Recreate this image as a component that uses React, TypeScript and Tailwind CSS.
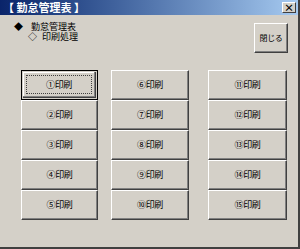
import React from "react";

const nums = ["①","②","③","④","⑤","⑥","⑦","⑧","⑨","⑩","⑪","⑫","⑬","⑭","⑮"];

function Btn({ label, focused, w }: { label: string; focused?: boolean; w: string }) {
  if (focused) {
    return (
      <div className={`${w} h-[30px] border border-black bg-[#d4d0c8] p-[1px]`}>
        <div className="h-full w-full border-r border-b border-[#404040] shadow-[inset_-1px_-1px_#808080,inset_1px_1px_#ffffff] p-[3px]">
          <div className="h-full w-full border border-dotted border-[#404040] flex items-center justify-center text-[9px] tracking-[-0.3px] whitespace-nowrap text-black">
            {label}
          </div>
        </div>
      </div>
    );
  }
  return (
    <div className={`${w} h-[30px] bg-[#d4d0c8] border-t border-l border-t-white border-l-white border-r border-b border-r-[#404040] border-b-[#404040] shadow-[inset_-1px_-1px_#808080] flex items-center justify-center text-[9px] tracking-[-0.3px] whitespace-nowrap text-black`}>
      {label}
    </div>
  );
}

export default function App() {
  const font = { fontFamily: '"Noto Sans CJK JP", "Liberation Sans", sans-serif' };
  return (
    <div className="w-[300px] h-[249px] bg-[#d4d0c8] border-r-2 border-b-2 border-r-[#404040] border-b-[#404040] flex flex-col overflow-hidden" style={font}>
      <div className="h-[15px] flex items-center justify-between pl-[3px] pr-[2px] bg-gradient-to-r from-[#0a246a] to-[#a6caf0]">
        <span className="text-white font-bold text-[11px] leading-none whitespace-nowrap">【 勤怠管理表 】</span>
        <div className="w-[14px] h-[11px] bg-[#d4d0c8] border-t border-l border-t-white border-l-white border-r border-b border-r-[#404040] border-b-[#404040] flex items-center justify-center text-[10px] leading-none font-bold text-black">×</div>
      </div>
      <div className="flex items-start justify-between pr-[10px] pt-[7px]">
        <div className="pl-[14px] text-[9px] leading-[10px] text-black whitespace-nowrap">
          <div className="flex items-center gap-[8px] h-[10px]"><span className="text-[9px] leading-[10px]">◆</span><span className="leading-[10px]">勤怠管理表</span></div>
          <div className="flex items-center gap-[5px] pl-[14px] h-[10px]"><span className="text-[9px] leading-[10px]">◇</span><span className="leading-[10px]">印刷処理</span></div>
        </div>
        <div className="mt-[1px] w-[34px] h-[30px] bg-[#d4d0c8] border-t border-l border-t-white border-l-white border-r border-b border-r-[#404040] border-b-[#404040] shadow-[inset_-1px_-1px_#808080] flex items-center justify-center text-[8px] tracking-[-0.3px] whitespace-nowrap text-black">閉じる</div>
      </div>
      <div className="flex pl-[21px] mt-[17px]">
        <div className="flex flex-col">
          {nums.slice(0, 5).map((n, i) => <Btn key={n} label={`${n}印刷`} focused={i === 0} w="w-[77px]" />)}
        </div>
        <div className="flex flex-col ml-[13px]">
          {nums.slice(5, 10).map((n) => <Btn key={n} label={`${n}印刷`} w="w-[78px]" />)}
        </div>
        <div className="flex flex-col ml-[19px]">
          {nums.slice(10, 15).map((n) => <Btn key={n} label={`${n}印刷`} w="w-[79px]" />)}
        </div>
      </div>
    </div>
  );
}
